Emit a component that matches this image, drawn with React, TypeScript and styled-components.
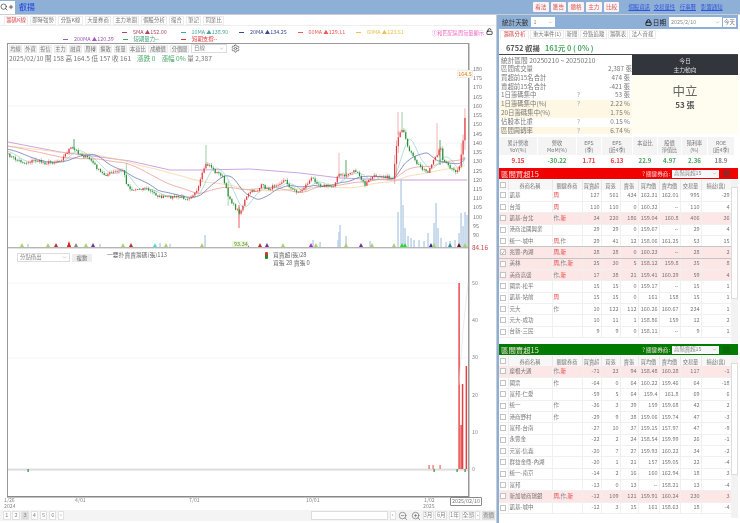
import React from 'react';
import styled, { createGlobalStyle } from 'styled-components';
import { Search, Plus, ZoomIn, ZoomOut, Settings, Lock, LockOpen, ChevronDown } from 'lucide-react';

const FONT = `'Noto Sans CJK TC','Liberation Sans',sans-serif`;

const Global = createGlobalStyle`
  html, body { margin: 0; padding: 0; background: #fff; overflow: hidden; }
  * { box-sizing: border-box; }
  #root { width: 740px; height: 523px; font-family: ${FONT}; color: #666; }
`;

const Page = styled.div`
  width: 740px; height: 523px; display: flex; flex-direction: column;
  background: #c9ced4; overflow: hidden; filter: blur(0.3px);
`;
const TopBar = styled.header`
  height: 14px; flex: none; background: #8fb0d6; display: flex; align-items: center;
`;
const SearchBox = styled.div`
  width: 15px; height: 13px; background: #fff; display: flex; align-items: center; color: #333;
`;
const Title = styled.span`
  margin-left: 4px; font-size: 8px; color: #1a3fe0; line-height: 1;
`;
const TopActions = styled.div`
  margin-left: auto; width: 207px; display: flex; gap: 2.2px; align-items: center;
`;
const TopBtn = styled.span`
  height: 10px; width: 15.5px; background: #fbf4f4; color: #d85a5a; font-size: 5.6px; line-height: 10px;
  text-align: center; border-radius: 1px;
`;
const TopLink = styled.a<{ $first?: boolean; $w: number }>`
  width: ${p => p.$w}px; color: #2f55d8; font-size: 5.4px; line-height: 10px; text-decoration: underline; white-space: nowrap;
  margin-left: ${p => (p.$first ? '7px' : '1px')};
`;
const Main = styled.div`
  flex: 1; display: flex; min-height: 0; gap: 1px; padding-top: 1px;
`;
const LeftPane = styled.section`
  width: 496px; background: #fff; display: flex; flex-direction: column;
`;
const RightPane = styled.section`
  width: 243px; background: #fff; border-left: 2px solid #8fb0d6; display: flex; flex-direction: column; padding-right: 2px;
`;
const Tabs = styled.nav<{ $pad?: number; $gap?: number }>`
  display: flex; gap: ${p => p.$gap ?? 2}px; padding-left: ${p => p.$pad ?? 4}px; height: 9px; margin-top: 1px; flex: none;
`;
const Tab = styled.span<{ $w: number; $active?: boolean }>`
  width: ${p => p.$w}px; height: 9px; border: 1px solid #ececec; border-bottom: ${p => (p.$active ? '0' : '1px solid #ececec')};
  font-size: 5.4px; line-height: 7.5px; text-align: center; color: ${p => (p.$active ? '#d94a4a' : '#777')}; white-space: nowrap; overflow: hidden;
`;
const Legend = styled.div`
  height: 18px; flex: none; position: relative; padding-top: 3px; display: flex; flex-direction: column; border-top: 1px solid #eee;
`;
const LegendRow = styled.div<{ $left: number }>`
  display: flex; height: 7px; padding-left: ${p => p.$left}px;
`;
const LegendItem = styled.span<{ $c: string; $w?: number }>`
  width: ${p => p.$w ?? 58.5}px; font-size: 5.4px; line-height: 7px; color: ${p => p.$c}; white-space: nowrap;
  &::before { content: ''; display: inline-block; width: 5px; height: 1px; background: ${p => p.$c}; vertical-align: middle; margin-right: 6px; }
`;
const Notice = styled.span`
  position: absolute; left: 432px; top: 3px; font-size: 5.2px; line-height: 7px; color: #ee66c0; white-space: nowrap;
`;
const LockMark = styled.span`
  position: absolute; left: 486px; top: 2px; color: #111; line-height: 0;
`;
const ChartArea = styled.div`
  flex: 1; position: relative; min-height: 0; background: #fff;
`;
const ChartSvg = styled.svg`
  position: absolute; inset: 0; width: 496px; height: 467px; display: block;
`;
const ChartTools = styled.div`
  position: absolute; left: 9px; top: 1px; display: flex; align-items: center; gap: 2px; height: 9px;
`;
const ToolBtn = styled.span<{ $w: number }>`
  width: ${p => p.$w}px; height: 8px; background: #f5f5f5; border: 1px solid #ececec; font-size: 5.2px; line-height: 6px; text-align: center; color: #777; white-space: nowrap;
`;
const FakeSelect = styled.span<{ $w: number }>`
  width: ${p => p.$w}px; height: 9px; background: #fff; border: 1px solid #ddd; font-size: 5.4px; line-height: 7px;
  padding: 0 2px; color: #888; display: flex; align-items: center; justify-content: space-between; white-space: nowrap; flex: none;
`;
const Quote = styled.div`
  position: absolute; left: 9px; top: 10px; font-size: 6.6px; line-height: 10px; color: #777; white-space: nowrap;
`;
const Up = styled.span` color: #4aa868; margin-left: 6px; `;
const IndicatorBar = styled.div`
  position: absolute; left: 17px; top: 210px; display: flex; align-items: center; gap: 2px;
`;
const IndBtn = styled.span`
  width: 20px; height: 8px; background: #eee; font-size: 5.4px; line-height: 8px; text-align: center; color: #777;
`;
const IndText = styled.span<{ $l: number; $t: number }>`
  position: absolute; left: ${p => p.$l}px; top: ${p => p.$t}px; font-size: 5.8px; line-height: 7px; color: #666; white-space: nowrap;
`;
const Lights = styled.span`
  position: absolute; left: 265px; top: 209px; width: 3px; height: 7px;
  background: linear-gradient(#d33 0 50%, #282 50% 100%); border-radius: 1px;
`;
const DateChip = styled.span`
  position: absolute; left: 450px; top: 454px; width: 32px; height: 9px; background: #fff; border: 1px solid #888; border-radius: 1px;
  font-size: 5.4px; line-height: 7px; text-align: center; color: #777;
`;
const PriceTag = styled.span`
  position: absolute; left: 457px; top: 27px; width: 16px; height: 8px; background: #fffbe6; border: 1px solid #eee; color: #e07a3a;
  font-size: 5.4px; line-height: 6px; text-align: center;
`;
const BottomBar = styled.footer`
  height: 11px; flex: none; background: #f4f4f4; display: flex; align-items: center; padding: 0 1px 0 3px; gap: 1.7px; margin-bottom: 2px;
`;
const PageBtn = styled.span<{ $active?: boolean; $w?: number }>`
  width: ${p => p.$w ?? 7.5}px; height: 9px; background: ${p => (p.$active ? '#ddd' : '#fff')}; border: 1px solid #e2e2e2;
  font-size: 5.6px; line-height: 7px; text-align: center; color: #888; flex: none; white-space: nowrap;
`;
const RangeInput = styled.span`
  width: 77px; height: 9px; background: #fff; border: 1px solid #ddd; margin-left: auto; flex: none;
`;
const ZoomBtn = styled.span<{ $ml?: number }>`
  margin-left: ${p => p.$ml ?? 1}px; color: #666; line-height: 0; flex: none;
`;
const ControlBar = styled.div`
  height: 14px; flex: none; background: #8fb0d6; display: flex; align-items: center; padding: 0 2px 0 3px; font-size: 6.6px; color: #333; white-space: nowrap;
`;
const DaySelect = styled(FakeSelect)`
  margin-left: 3px; border: 0; height: 10px;
`;
const DateLabel = styled.span`
  margin-left: auto; display: flex; align-items: center; gap: 1px; color: #222;
`;
const DateInput = styled(FakeSelect)`
  margin-left: 3px; border: 0; height: 10px;
`;
const TodayBtn = styled.span`
  width: 13px; height: 9px; margin-left: 1px; background: #fff; font-size: 5.4px; line-height: 9px; text-align: center; color: #777;
`;
const StockLine = styled.div`
  height: 14px; flex: none; padding-left: 7px; display: flex; align-items: center; gap: 5px; font-size: 7.4px; font-weight: 700; color: #555; margin-top: 1px; white-space: pre;
`;
const StockPrice = styled.span` color: #4aa860; `;
const Summary = styled.div`
  height: 80px; flex: none; display: flex; border-top: 1px solid #444;
`;
const SummaryList = styled.div`
  width: 133px; overflow: hidden; padding-top: 1px;
`;
const SummaryRow = styled.div<{ $hi?: boolean }>`
  height: 8.85px; display: grid; grid-template-columns: 76px 1fr 22px; font-size: 6.4px; line-height: 8.85px; color: #777; padding: 0 2px;
  background: ${p => (p.$hi ? '#fdf7e3' : '#fff')}; white-space: nowrap;
`;
const RowHint = styled.span` color: #9ab; text-align: left; `;
const RowValue = styled.span` text-align: right; `;
const Range = styled.div`
  height: 8.85px; font-size: 6.7px; line-height: 8.85px; padding: 0 2px; color: #777; white-space: nowrap;
`;
const Trend = styled.div`
  flex: 1; display: flex; flex-direction: column; background: #fffdf0;
`;
const TrendHead = styled.div`
  height: 20px; background: #33353c; color: #ddd; font-size: 5.8px; line-height: 9px; text-align: center; padding-top: 1px;
`;
const TrendBody = styled.div`
  flex: 1; display: flex; flex-direction: column; align-items: center; padding-top: 8px; color: #666;
`;
const TrendBig = styled.span` font-size: 12.5px; line-height: 15px; `;
const TrendSub = styled.span` font-size: 8px; line-height: 12px; font-weight: 700; color: #555; margin-top: 1px; `;
const Metrics = styled.div`
  display: flex; flex: none; gap: 1px; margin-top: 3px; height: 30px;
`;
const Metric = styled.div<{ $w: number }>`
  width: ${p => p.$w}px; flex: none; display: flex; flex-direction: column; text-align: center;
`;
const MetricHead = styled.div`
  height: 18px; background: #f4f4f4; font-size: 5.2px; line-height: 7px; color: #777; padding-top: 2px; white-space: pre-line;
`;
const MetricValue = styled.div<{ $c: string }>`
  height: 11px; font-size: 6.2px; line-height: 12px; font-weight: 700; color: ${p => p.$c};
`;
const Panel = styled.div<{ $h: number }>`
  height: ${p => p.$h}px; flex: none; display: flex; flex-direction: column; overflow: hidden; margin-top: 1px;
`;
const Band = styled.div<{ $c: string }>`
  height: 11px; flex: none; background: ${p => p.$c}; color: #f6dcdc; display: flex; align-items: center; padding: 0 2px; font-size: 7.4px; white-space: nowrap;
`;
const BandRight = styled.span`
  margin-left: auto; display: flex; align-items: center; gap: 2px; font-size: 5.6px;
`;
const BandSelect = styled(FakeSelect)`
  border: 0; height: 8px; background: #f7f7f7;
`;
const BandSquare = styled.span<{ $c: string }>`
  width: 7px; height: 7px; background: ${p => p.$c}; margin: 0 6px 0 2px;
`;
const TableWrap = styled.div`
  flex: 1; display: flex; min-height: 0; margin-top: 1px;
`;
const TableClip = styled.div`
  width: 232px; flex: none; overflow: hidden;
`;
const Grid = styled.table`
  width: 232px; table-layout: fixed; border-collapse: collapse;
`;
const Th = styled.th`
  height: 10px; padding: 0; background: #f7f7f7; border-right: 1px solid #e8e8e8; font-weight: 400; font-size: 5.2px; color: #777; line-height: 9px; white-space: nowrap; overflow: hidden;
`;
const Tr = styled.tr<{ $pink?: boolean; $sel?: boolean }>`
  height: 11.35px; background: ${p => (p.$pink ? '#fce6e6' : '#fff')};
  outline: ${p => (p.$sel ? '1px solid #c4c4c4' : 'none')};
`;
const Td = styled.td<{ $left?: boolean }>`
  padding: 0 1px; line-height: 9px; color: #777; font-size: 5.5px; text-align: ${p => (p.$left ? 'left' : 'right')};
  border-right: 1px solid #f0f0f0; border-bottom: 1px solid #f0f0f0; white-space: nowrap; overflow: hidden;
`;
const Box = styled.span`
  display: block; width: 6px; height: 6px; margin: 0 auto; border: 1px solid #c4c4c4; background: #fff; font-size: 5px; line-height: 4px; text-align: center;
`;
const Key = styled.span<{ $red?: boolean }>` color: ${p => (p.$red ? '#e84040' : '#888')}; `;
const Scroll = styled.div`
  width: 7px; flex: none; background: #f2f2f2; display: flex; flex-direction: column; padding-top: 7px;
`;
const Thumb = styled.div<{ $h: number }>`
  height: ${p => p.$h}px; background: #fff; border: 1px solid #ddd;
`;

type RowT = [string, string, number, number, number, string, string, number, number, boolean?, boolean?];
const buyRows: RowT[] = [
  ['凱基', '周', 127, 561, 434, '162.31', '162.01', 995, -29],
  ['台灣', '周', 110, 110, 0, '160.32', '--', 110, 4],
  ['凱基-台北', '作,新', 34, 220, 186, '159.04', '160.8', 406, 36, true],
  ['港商法國興業', '', 29, 29, 0, '159.67', '--', 29, 4],
  ['統一-城中', '周,作', 29, 41, 12, '158.06', '161.25', 53, 15],
  ['兆豐-內湖', '周,新', 28, 28, 0, '160.23', '--', 28, 2, true, true],
  ['美林', '周,作,新', 25, 30, 5, '158.12', '159.8', 35, 8, true],
  ['美商高盛', '作,新', 17, 38, 21, '159.41', '160.29', 59, 4, true],
  ['國票-松平', '', 15, 15, 0, '159.17', '--', 15, 1],
  ['凱基-站前', '周', 15, 15, 0, '161', '158', 15, 1],
  ['元大', '作', 10, 122, 112, '160.26', '160.67', 234, 1],
  ['元大-成功', '', 10, 11, 1, '158.86', '159', 12, 2],
  ['台新-三民', '', 9, 9, 0, '158.11', '--', 9, 1],
];
const sellRows: RowT[] = [
  ['摩根大通', '作,新', -71, 23, 94, '158.48', '160.28', 117, -1, true],
  ['國票', '作', -64, 0, 64, '160.22', '159.46', 64, -18],
  ['富邦-仁愛', '', -59, 5, 64, '159.4', '161.8', 69, 6],
  ['統一', '作', -36, 3, 39, '159', '159.68', 42, 2],
  ['港商野村', '作', -29, 9, 38, '159.06', '159.74', 47, -3],
  ['富邦-台南', '', -27, 10, 37, '159.15', '157.97', 47, -9],
  ['永豐金', '', -22, 2, 24, '158.54', '159.99', 26, -1],
  ['元富-信義', '', -20, 7, 27, '159.93', '160.22', 34, -2],
  ['群益金鼎-內湖', '', -20, 1, 21, '157', '159.05', 22, -4],
  ['統一-南京', '', -14, 2, 16, '160', '162.94', 18, 3],
  ['富邦', '', -13, 0, 13, '--', '158.21', 13, -4],
  ['新加坡商瑞銀', '周,作,新', -12, 109, 121, '159.91', '160.24', 230, 3, true],
  ['凱基-城中', '', -12, 3, 15, '161', '158.63', 18, -4],
];
const colW = [9, 44, 30, 19, 19, 18, 21, 21, 21, 30];
const heads = ['', '券商名稱', '關鍵券商', '買賣超', '買張', '賣張', '買均價', '賣均價', '交易量', '損益(萬)'];

const KeyCell = ({ v }: { v: string }) => (
  <>
    {v.split(',').filter(Boolean).map((k, i) => (
      <React.Fragment key={k}>
        {i > 0 && <Key>,</Key>}
        <Key $red={k !== '作'}>{k}</Key>
      </React.Fragment>
    ))}
  </>
);

const BrokerTable = ({ rows, thumb }: { rows: RowT[]; thumb: number }) => (
  <TableWrap>
    <TableClip>
      <Grid>
        <colgroup>{colW.map((w, i) => <col key={i} style={{ width: w }} />)}</colgroup>
        <thead>
          <tr>{heads.map((h, i) => <Th key={i}>{i === 0 ? <Box /> : h}</Th>)}</tr>
        </thead>
        <tbody>
          {rows.map(r => (
            <Tr key={r[0]} $pink={r[9]} $sel={r[10]}>
              <Td><Box>{r[10] ? '✓' : ''}</Box></Td>
              <Td $left>{r[0]}</Td>
              <Td $left><KeyCell v={r[1]} /></Td>
              {r.slice(2, 9).map((c, i) => <Td key={i}>{c as React.ReactNode}</Td>)}
            </Tr>
          ))}
        </tbody>
      </Grid>
    </TableClip>
    <Scroll><Thumb $h={thumb} /></Scroll>
  </TableWrap>
);

// ---------- chart data ----------
const keys: [number, number][] = [
  [8,155],[15,159],[25,163],[35,160],[45,163],[55,162],[62,159],[70,148],[75,150],[83,156],[90,159],[100,172],[105,175],[115,172],[123,170],
  [127,185],[132,190],[145,188],[160,197],[175,197],[188,198],[197,192],[205,165],[210,165],[215,172],[222,175],[228,195],[235,208],[240,213],
  [245,200],[250,192],[258,190],[262,185],[268,190],[275,185],[285,180],[292,190],[300,192],[312,178],[320,185],[333,187],[338,175],[345,176],
  [355,170],[365,185],[372,177],[380,175],[390,178],[393,178],[396,150],[399,135],[403,130],[407,145],[412,155],[416,163],[422,168],[428,172],
  [433,162],[437,155],[440,145],[443,160],[450,168],[456,173],[460,165],[463,140],[466,108],
];
const interp = (x: number, pts: [number, number][]) => {
  for (let i = 1; i < pts.length; i++) {
    if (x <= pts[i][0]) {
      const [a, b] = pts[i - 1]; const [c, d] = pts[i];
      return b + ((d - b) * (x - a)) / (c - a);
    }
  }
  return pts[pts.length - 1][1];
};
let seed = 7;
const rnd = () => { seed = (seed * 16807) % 2147483647; return seed / 2147483647; };
const xs: number[] = [];
for (let x = 8; x <= 466.5; x += 1.85) xs.push(x);
const closes = xs.map(x => interp(x, keys) + (rnd() - 0.5) * 3);
const candles = xs.map((x, i) => {
  const c = closes[i]; const o = i ? closes[i - 1] : c;
  const extra = Math.abs(c - o) > 8 ? 5 : 1;
  return { x, o, c, hi: Math.min(o, c) - rnd() * 2.5 * extra, lo: Math.max(o, c) + rnd() * 2.5 * extra };
});
const ma = (n: number, before: number) =>
  xs.map((x, i) => {
    let s = 0;
    for (let k = 0; k < n; k++) s += i - k >= 0 ? closes[i - k] : before;
    return `${x.toFixed(1)},${(s / n).toFixed(1)}`;
  }).join(' ');
const ma200 = '8,142 60,152 100,157 130,161 170,170 200,170 250,169 300,173 340,178 393,180 467,180';
const wicks: [number, number, number, string][] = [
  [206, 145, 165, '#7fc08a'], [74, 139, 150, '#2a8f3a'], [339, 153, 175, '#f0a0a0'], [346, 160, 176, '#2a8f3a'],
  [398, 112, 135, '#f0a0a0'], [402, 112, 130, '#7fc08a'], [437, 123, 155, '#f0a0a0'], [440, 140, 165, '#2a8f3a'], [239, 205, 228, '#e33'],
];
const gridY = [69, 106, 143, 180, 217];
const vols: [number, number][] = [
  [205,235],[340,225],[339,232],[346,236],[338,240],[398,212],[401,180],[403,205],[405,228],[408,236],[411,238],[414,240],[419,240],[424,241],
  [428,233],[434,223],[436,203],[438,228],[441,238],[446,242],[450,241],[455,240],[459,233],[461,213],[463,226],[465,212],[467,215],[313,240],[320,242],[370,241],[160,243],[28,244],[100,244],[170,244],[245,243],
];
const tris: [number, string][] = [
  [22,'#a6d36a'],[48,'#a6d36a'],[56,'#b33'],[69,'#d22'],[76,'#888'],[86,'#a6d36a'],[93,'#7030a0'],[123,'#a6d36a'],[131,'#b33'],[155,'#4dd'],[166,'#a6d36a'],[202,'#a6d36a'],
  [247,'#b33'],[260,'#b33'],[267,'#7030a0'],[283,'#a6d36a'],[311,'#a030c0'],[316,'#a6d36a'],[346,'#a6d36a'],[361,'#7030a0'],[372,'#a6d36a'],[394,'#a6d36a'],[402,'#22dd22'],[405,'#22dd22'],[431,'#3030a0'],[434,'#a6d36a'],[450,'#2a8f8f'],[459,'#701010'],[465,'#a6d36a'],
];

const PriceChart = () => (
  <ChartSvg viewBox="0 43 496 467">
    {gridY.map(y => <line key={y} x1={8} x2={468} y1={y} y2={y} stroke="#f4f4f4" strokeWidth={1} />)}
    <line x1={8} x2={468} y1={283} y2={283} stroke="#f6f6f6" />
    <line x1={8} x2={468} y1={358} y2={358} stroke="#f6f6f6" />
    {vols.map(([x, y], i) => <rect key={i} x={x - 0.7} y={y} width={1.5} height={247 - y} fill="#bcd2e8" />)}
    <polyline points={ma200} fill="none" stroke="#c79adf" strokeWidth={0.9} />
    <polyline points={ma(70, 146)} fill="none" stroke="#f3cf8e" strokeWidth={0.7} />
    <polyline points={ma(40, 146)} fill="none" stroke="#ee9a94" strokeWidth={0.8} />
    <polyline points={ma(18, 149)} fill="none" stroke="#6a78b8" strokeWidth={0.8} />
    <polyline points={ma(8, 151)} fill="none" stroke="#86c8c4" strokeWidth={0.6} />
    {wicks.map(([x, a, b, c], i) => <line key={i} x1={x} x2={x} y1={a} y2={b} stroke={c} strokeWidth={0.8} />)}
    {candles.map((k, i) => {
      const up = k.c <= k.o; const col = up ? '#e33b3b' : '#2a8f3a';
      return (
        <g key={i}>
          <line x1={k.x} x2={k.x} y1={k.hi} y2={k.lo} stroke={col} strokeWidth={0.4} />
          <rect x={k.x - 0.6} y={Math.min(k.o, k.c)} width={1.2} height={Math.max(Math.abs(k.c - k.o), 0.7)} fill={col} />
        </g>
      );
    })}
    {tris.map(([x, c], i) => <polygon key={i} points={`${x - 2},247 ${x + 2},247 ${x},243`} fill={c} />)}
    <polygon points="67,247 71,247 69,241" fill="#d22" />
    <rect x={232} y={241} width={16} height={6} fill="#eef6d8" />
    <text x={234} y={246} fontSize={5.5} fill="#5a9a40">93.34</text>

    {/* frame */}
    <rect x={7} y={43} width={1} height={454} fill="#999" />
    <rect x={468} y={43} width={1.5} height={454} fill="#999" />
    <rect x={7} y={43} width={462} height={1} fill="#999" />
    <rect x={7} y={496} width={462} height={1.5} fill="#888" />
    <rect x={8} y={247} width={460} height={1.4} fill="#b5b5b5" />

    {[180,175,170,165,160,155,150,145,140,135,130,125,120,115,110,105,100,95,90].map((p, i) => (
      <text key={p} x={473} y={71 + i * 9.23} fontSize={5.4} fill="#777">{p}</text>
    ))}
    <text x={472} y={250} fontSize={6.4} fill="#c44">84.16</text>
    {[50,40,30,20,10,0].map((p, i) => (
      <text key={p} x={472} y={285 + i * 37.2} fontSize={5.4} fill="#888">{p}</text>
    ))}

    {/* lower indicator */}
    <rect x={8} y={468.6} width={460} height={2} fill="#ddd" />
    <rect x={458.4} y={283} width={1.4} height={186} fill="#e84040" />
    <rect x={460.4} y={425} width={1.4} height={44} fill="#e84040" />
    <rect x={461.8} y={384} width={1.5} height={85} fill="#e84040" />
    <rect x={465.6} y={366} width={1.5} height={103} fill="#e84040" />
    <polyline points="459,385 463,330 468,283" fill="none" stroke="#ddd" strokeWidth={0.6} />
    {[429,433,440].map(x => <rect key={x} x={x - 0.5} y={465} width={1.2} height={4} fill="#e66" />)}
    {[434,457,465,28].map(x => <rect key={x} x={x - 0.5} y={469} width={1.2} height={3} fill="#2a8f3a" />)}

    <text x={4} y={502} fontSize={5.2} fill="#888">1/26</text>
    <text x={4} y={508} fontSize={5.2} fill="#888">2024</text>
    <text x={75} y={502} fontSize={5.2} fill="#888">4/01</text>
    <text x={189} y={502} fontSize={5.2} fill="#888">7/01</text>
    <text x={306} y={502} fontSize={5.2} fill="#888">10/01</text>
    <text x={424} y={502} fontSize={5.2} fill="#888">1/02</text>
    <text x={423} y={508} fontSize={5.2} fill="#888">2025</text>
  </ChartSvg>
);

const legend1 = [
  ['5MA ▲152.00', '#b0455a'], ['10MA ▲138.90', '#45a8a0'], ['20MA ▲134.25', '#3a4a90'], ['60MA ▲129.11', '#ee5a5a'], ['60MA ▲123.51', '#eec050'],
];
const tools: [string, number][] = [['均線',13],['外資',13],['投信',13],['主力',13],['融資',13],['周轉',13],['擴散',13],['揮量',13],['本益比',17],['成績價',20],['分價圖',19]];
const tabsL: [string, number][] = [['籌碼K線',24],['即時強勢',26],['分點K線',25],['大量券商',26],['主力地圖',26],['個股分析',26],['撮合',15],['筆記',15],['同業比',21]];
const tabsR: [string, number][] = [['籌碼分析',29],['重大事件(1)',34],['新聞',14],['分點追蹤',27],['籌碼表',20],['法人音樣',27]];
const metrics: [string, string, string, number][] = [
  ['累計營收\nYoY(%)','9.15','#e84040',38],['營收\nMoM(%)','-30.22','#4aa860',38],['EPS\n(季)','1.71','#e84040',24],['EPS\n(近4季)','6.13','#e84040',30],
  ['本益比','22.9','#4aa860',24],['股價\n淨值比','4.97','#4aa860',23],['殖利率\n(%)','2.36','#4aa860',25],['ROE\n(近4季)','18.9','#888',26],
];
const sums: [string, string, string, boolean?][] = [
  ['區間成交量','','2,387 張'],['買超前15名合計','','474 張'],['賣超前15名合計','','-421 張'],['1日籌碼集中','?','53 張'],
  ['1日籌碼集中(%)','?','2.22 %',true],['20日籌碼集中(%)','','1.75 %',true],['佔股本比重','?','0.15 %'],['區間周轉率','?','6.74 %',true],
];

export default function App() {
  return (
    <Page>
      <Global />
      <TopBar>
        <SearchBox><Search size={8} strokeWidth={2} /><Plus size={6} strokeWidth={3} /></SearchBox>
        <Title>叡揚</Title>
        <TopActions>
          {['看法','獲告','體格','主力','比較'].map(t => <TopBtn key={t}>{t}</TopBtn>)}
          <TopLink $first $w={22}>個股資訊</TopLink><TopLink $w={23}>交易量性</TopLink><TopLink $w={18}>行事曆</TopLink><TopLink $w={23}>影響通知</TopLink>
        </TopActions>
      </TopBar>
      <Main>
        <LeftPane>
          <Tabs>{tabsL.map(([t, w], i) => <Tab key={t} $w={w} $active={i === 0}>{t}</Tab>)}</Tabs>
          <Legend>
            <LegendRow $left={122}>
              {legend1.map(([t, c]) => <LegendItem key={t} $c={c}>{t}</LegendItem>)}
            </LegendRow>
            <LegendRow $left={63}>
              <LegendItem $c="#a05ac0" $w={59.5}>200MA ▲120.39</LegendItem>
              <LegendItem $c="#3aa070">短期量力--</LegendItem>
              <LegendItem $c="#e03030">短期支撐--</LegendItem>
            </LegendRow>
            <Notice>①和匹配區周無量顯示</Notice>
            <LockMark><LockOpen size={7} strokeWidth={2.5} /></LockMark>
          </Legend>
          <ChartArea>
            <PriceChart />
            <ChartTools>
              {tools.map(([t, w]) => <ToolBtn key={t} $w={w}>{t}</ToolBtn>)}
              <FakeSelect $w={36}>日線<ChevronDown size={5} /></FakeSelect>
              <Settings size={9} color="#555" style={{ marginLeft: 2 }} />
            </ChartTools>
            <Quote>
              2025/02/10 開 158 高 164.5 低 157 收 161<Up>漲跌 0</Up><Up>漲幅 0%</Up> 量 2,387
            </Quote>
            <PriceTag>164.5</PriceTag>
            <IndicatorBar>
              <FakeSelect $w={53}>分點借出<ChevronDown size={5} /></FakeSelect>
              <IndBtn>複數</IndBtn>
            </IndicatorBar>
            <IndText $l={107} $t={208}>一要扑賣賣籌碼(張)113</IndText>
            <Lights />
            <IndText $l={273} $t={208}>買賣超(張)28</IndText>
            <IndText $l={273} $t={216}>買張 28 賣張 0</IndText>
            <DateChip>2025/02/10</DateChip>
          </ChartArea>
          <BottomBar>
            {['1','2','3','4','5','6'].map(n => <PageBtn key={n} $active={n === '3'}>{n}</PageBtn>)}
            <PageBtn $w={5.5}>›</PageBtn>
            <RangeInput />
            <PageBtn $w={6}>›</PageBtn>
            <ZoomBtn><ZoomOut size={10} strokeWidth={1.5} /></ZoomBtn>
            <ZoomBtn><ZoomIn size={10} strokeWidth={1.5} /></ZoomBtn>
            <PageBtn $w={11}>3月</PageBtn>
            <PageBtn $w={12}>6月</PageBtn>
            <PageBtn $w={11}>1年</PageBtn>
            <PageBtn $w={12}>全部</PageBtn>
            <PageBtn $w={5}>-</PageBtn>
            <PageBtn $w={13} $active>查價</PageBtn>
          </BottomBar>
        </LeftPane>
        <RightPane>
          <ControlBar>
            統計天數
            <DaySelect $w={24}>1<ChevronDown size={5} /></DaySelect>
            <DateLabel><Lock size={7} color="#111" strokeWidth={3} />日期</DateLabel>
            <DateInput $w={53}>2025/2/10<ChevronDown size={5} /></DateInput>
            <TodayBtn>今天</TodayBtn>
          </ControlBar>
          <Tabs $pad={1} $gap={1}>{tabsR.map(([t, w], i) => <Tab key={t} $w={w} $active={i === 0}>{t}</Tab>)}</Tabs>
          <StockLine>6752 叡揚<StockPrice>161元 0 ( 0% )</StockPrice></StockLine>
          <Summary>
            <SummaryList>
              <Range>統計區間 20250210 ~ 20250210</Range>
              {sums.map(([a, b, c, hi]) => (
                <SummaryRow key={a} $hi={hi}><span>{a}</span><RowHint>{b}</RowHint><RowValue>{c}</RowValue></SummaryRow>
              ))}
            </SummaryList>
            <Trend>
              <TrendHead>今日<br />主力動向</TrendHead>
              <TrendBody><TrendBig>中立</TrendBig><TrendSub>53 張</TrendSub></TrendBody>
            </Trend>
          </Summary>
          <Metrics>
            {metrics.map(([h, v, c, w]) => (
              <Metric key={h} $w={w}><MetricHead>{h}</MetricHead><MetricValue $c={c}>{v}</MetricValue></Metric>
            ))}
          </Metrics>
          <Panel $h={175}>
            <Band $c="#f00000">區間買超15
              <BandRight>? 關鍵券商: <BandSelect $w={47}>高階買超15<ChevronDown size={5} /></BandSelect><BandSquare $c="#a02020" /></BandRight>
            </Band>
            <BrokerTable rows={buyRows} thumb={112} />
          </Panel>
          <Panel $h={174}>
            <Band $c="#007a00">區間賣超15
              <BandRight>? 關鍵券商: <BandSelect $w={47}>高階賣超15<ChevronDown size={5} /></BandSelect><BandSquare $c="#0a6a0a" /></BandRight>
            </Band>
            <BrokerTable rows={sellRows} thumb={112} />
          </Panel>
        </RightPane>
      </Main>
    </Page>
  );
}
